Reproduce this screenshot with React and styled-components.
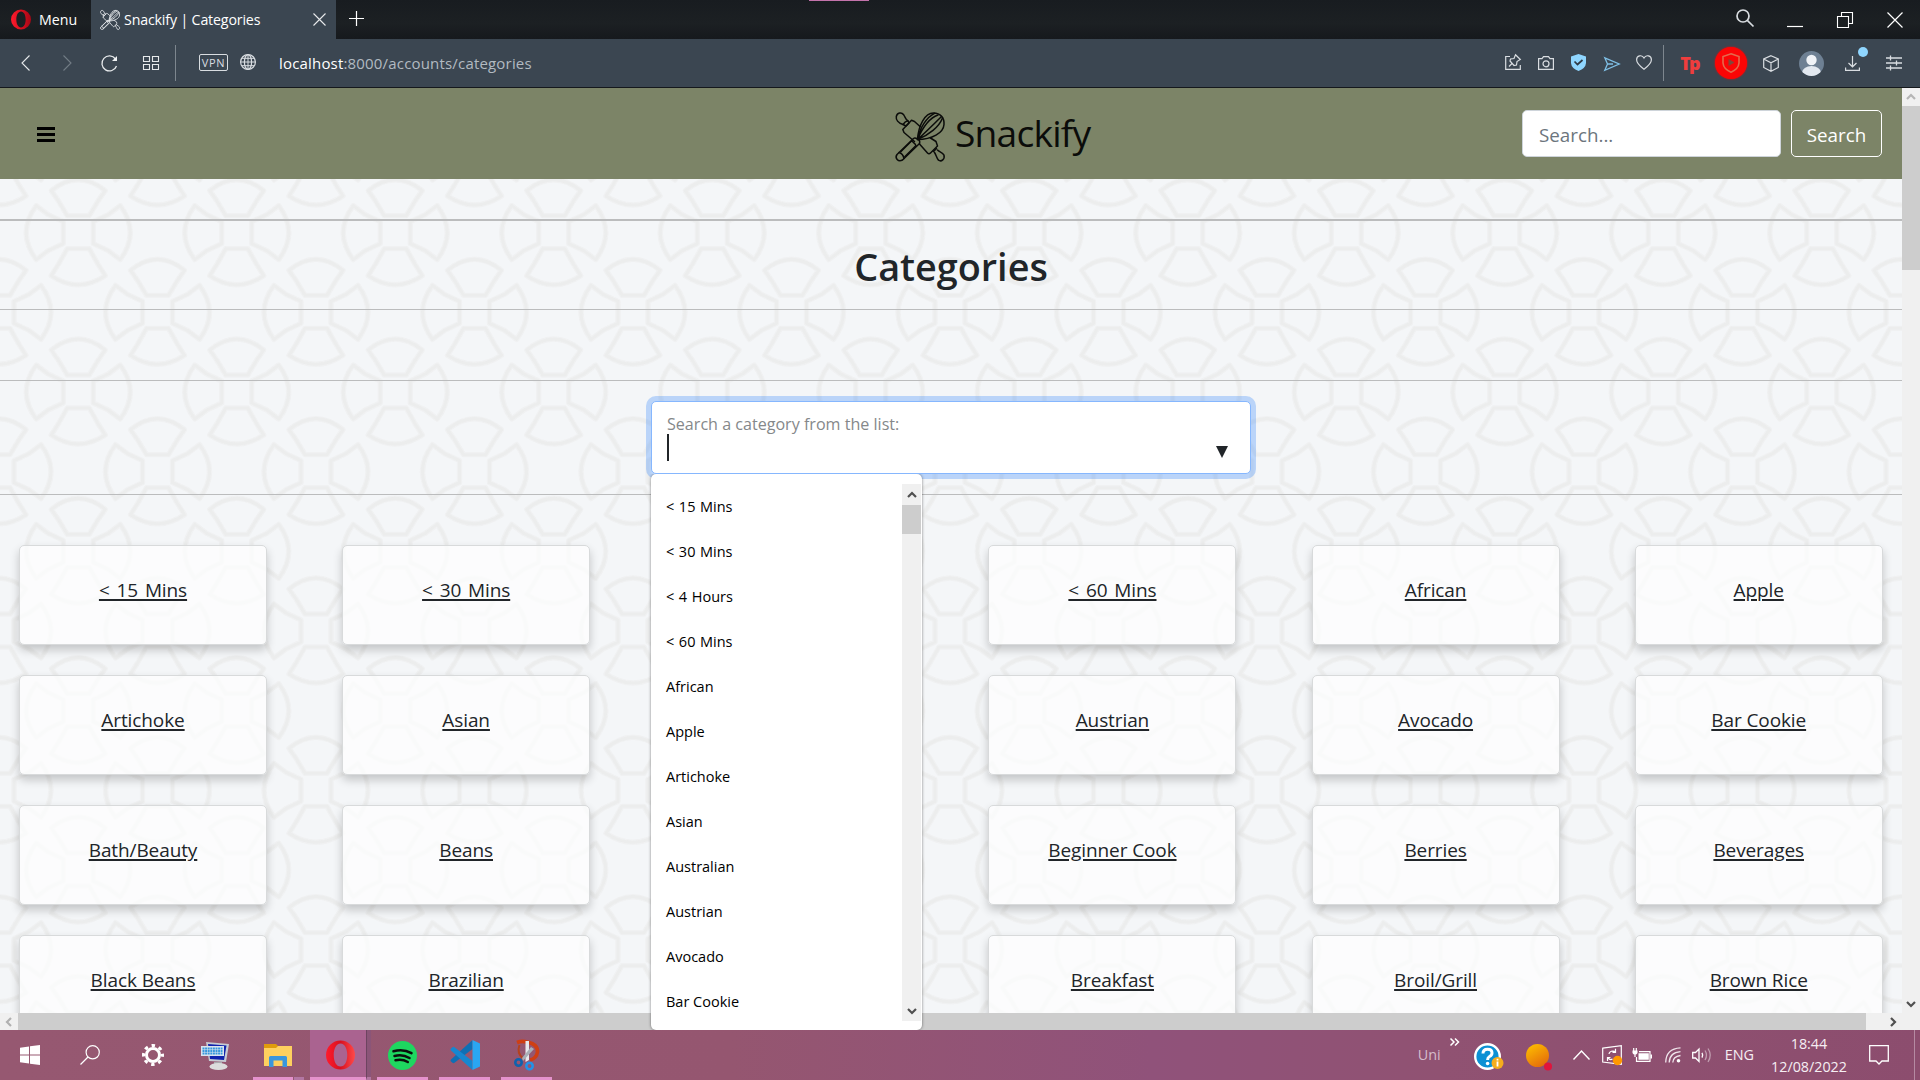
import React from "react";
import styled, { createGlobalStyle, css } from "styled-components";

const petals = [
  "M-11 -16 L11 -16 L20 -31 L27 -41 Q0 -63 -27 -41 L-20 -31 Z",
  "M-11 17 L11 17 L20 33 L27 44 Q0 62 -27 44 L-20 33 Z",
  "M-15 -10 L-15 12 L-30 19 L-42 28 Q-62 1 -42 -26 L-30 -17 Z",
  "M15 -10 L15 12 L30 19 L42 28 Q62 1 42 -26 L30 -17 Z",
].join(" ");
const COLS = 2;
const ROWS = 3;
const TILE_W = 317;
const TILE_H = 478;
const PX = TILE_W / COLS;
const PY = TILE_H / ROWS;
const centres = [];
for (let r = 0; r <= ROWS; r += 1) {
  for (let c = 0; c <= COLS; c += 1) {
    centres.push([c * PX, r * PY]);
    if (r < ROWS && c < COLS) centres.push([(c + 0.5) * PX, (r + 0.5) * PY]);
  }
}
const flowers = centres
  .map(([x, y]) => `<path transform='translate(${x.toFixed(2)} ${y.toFixed(2)})' d='${petals}'/>`)
  .join("");
const tile = `<svg xmlns='http://www.w3.org/2000/svg' width='${TILE_W}' height='${TILE_H}' viewBox='0 0 ${TILE_W} ${TILE_H}'><g fill='none' stroke='#ebecec' stroke-linejoin='round'><g stroke-width='5.4' stroke-opacity='.5'>${flowers}</g><g stroke-width='3' stroke-opacity='.8'>${flowers}</g></g></svg>`;
const tileUrl = `data:image/svg+xml,${encodeURIComponent(tile).replace(/'/g, "%27").replace(/\(/g, "%28").replace(/\)/g, "%29")}`;

const Global = createGlobalStyle`
  * { box-sizing: border-box; }
  html, body { margin: 0; padding: 0; overflow: hidden; }
  body { font-family: "Open Sans", "Noto Sans", sans-serif; }
  svg { display: block; flex: none; overflow: visible; }
`;

const Screen = styled.div`
  width: 1920px;
  height: 1080px;
  display: flex;
  flex-direction: column;
  overflow: hidden;
`;

const Label = styled.span`
  flex: none;
  white-space: pre;
  font-size: ${(p) => p.$size}px;
  font-weight: ${(p) => p.$weight || 400};
  letter-spacing: ${(p) => p.$track || 0}px;
  color: ${(p) => p.$color || "inherit"};
  margin-left: ${(p) => p.$gap || 0}px;
  line-height: 20px;
`;

const Glyph = styled.svg`
  width: ${(p) => p.$w}px;
  height: ${(p) => p.$h || p.$w}px;
  margin-left: ${(p) => p.$gap || 0}px;
  margin-top: ${(p) => p.$top || 0}px;
  fill: none;
  stroke: ${(p) => p.$color || "#d9dde1"};
  stroke-width: ${(p) => p.$stroke || 1.2};
`;

function Icon({ w, h = w, gap, top, color, stroke, box, children }) {
  return (
    <Glyph $w={w} $h={h} $gap={gap} $top={top} $color={color} $stroke={stroke} viewBox={box || `0 0 ${w} ${h}`}>
      {children}
    </Glyph>
  );
}

/* ---------- browser chrome ---------- */
const TabStrip = styled.header`
  height: 39px;
  flex: none;
  display: flex;
  align-items: stretch;
  position: relative;
  background: linear-gradient(#181c20, #1c2023 60%, #16191d);
  color: #fff;
`;
const Accent = styled.i`
  position: absolute;
  top: 0;
  left: 809px;
  width: 60px;
  height: 1px;
  background: #c373ab;
`;
const MenuButton = styled.div`
  width: 91px;
  padding-left: 11px;
  display: flex;
  align-items: center;
`;
const Tab = styled.div`
  width: 245px;
  padding: 0 10px 0 9px;
  display: flex;
  align-items: center;
  background: #3b4651;
`;
const Spacer = styled.div`
  flex: 1;
`;
const StripTools = styled.div`
  display: flex;
  align-items: center;
  padding-right: 17px;
`;
const AddressBar = styled.div`
  height: 49px;
  flex: none;
  display: flex;
  align-items: center;
  padding: 0 18px 0 21px;
  background: #3b4651;
  border-bottom: 1px solid #15181c;
`;
const Divider = styled.i`
  width: 1px;
  height: 36px;
  margin-left: ${(p) => p.$gap}px;
  background: #7d868e;
`;
const VpnBadge = styled.div`
  width: 29px;
  height: 17px;
  margin: -2px 0 0 23px;
  display: flex;
  align-items: center;
  justify-content: center;
  border: 1px solid #d9dde1;
  border-radius: 2px;
  color: #d9dde1;
  font-size: 11px;
  letter-spacing: 0.6px;
`;
const RedBadge = styled.div`
  width: 32px;
  height: 32px;
  margin-left: 16px;
  border-radius: 50%;
  background: #fb0505;
  box-shadow: 0 0 2px #fb0505;
  display: flex;
  align-items: center;
  justify-content: center;
`;

/* ---------- viewport ---------- */
const Viewport = styled.div`
  height: 942px;
  flex: none;
  display: grid;
  grid-template-columns: 1902px 18px;
  grid-template-rows: 925px 17px;
  position: relative;
`;
const Page = styled.main`
  overflow: hidden;
  background: #f4f6f8 url("${tileUrl}") -1px 64px / ${TILE_W}px ${TILE_H}px;
`;
const Navbar = styled.nav`
  height: 91px;
  padding: 0 20px 0 37px;
  display: grid;
  grid-template-columns: 858px auto 1fr;
  align-items: center;
  background: #7c8467;
`;
const Burger = styled.div`
  width: 18px;
  height: 15px;
  margin-top: 2px;
  display: flex;
  flex-direction: column;
  justify-content: space-between;
  i {
    height: 3px;
    background: #000;
  }
`;
const Brand = styled.div`
  display: flex;
  align-items: center;
  margin-top: -1px;
  color: #0b0c0a;
`;
const SearchForm = styled.div`
  display: flex;
  justify-content: flex-end;
  gap: 10px;
`;
const field = css`
  height: 47px;
  border-radius: 5px;
  display: flex;
  align-items: center;
`;
const SearchBox = styled.div`
  ${field}
  width: 259px;
  padding: 2px 0 0 16px;
  border: 1px solid #ced4da;
  background: #fff;
  color: #6c757d;
`;
const SearchButton = styled.div`
  ${field}
  width: 91px;
  padding-top: 2px;
  justify-content: center;
  border: 1px solid #fff;
  color: #fff;
`;
const Rule = styled.div`
  height: ${(p) => p.$h || 1}px;
  margin-top: ${(p) => p.$gap}px;
  background: #bbbcbd;
`;
const Heading = styled.h1`
  height: 88px;
  margin: 0;
  padding-top: 18px;
  text-align: center;
  color: #212529;
  font-size: 37.8px;
  line-height: 56px;
  font-weight: 600;
`;
const Picker = styled.div`
  width: 600px;
  height: 73px;
  margin: 20px 0 0 651px;
  padding: 11px 22px 0 15px;
  border: 1px solid #86b7fe;
  border-radius: 5px;
  box-shadow: 0 0 0 5px rgba(13, 110, 253, 0.25);
  background: #fff;
`;
const PickerLine = styled.div`
  display: flex;
  justify-content: space-between;
  align-items: center;
  margin-top: -1px;
`;
const Caret = styled.i`
  width: 2px;
  height: 27px;
  background: #212529;
`;
const Arrow = styled.i`
  margin-top: 8px;
  border: 6.5px solid transparent;
  border-top: 12px solid #212529;
  border-bottom: 0;
`;
const Grid = styled.section`
  margin: 50px 0 0 19px;
  display: grid;
  grid-template-columns: repeat(6, 248px);
  grid-auto-rows: 100px;
  column-gap: 75.15px;
  row-gap: 30px;
`;
const Card = styled.a`
  display: flex;
  justify-content: center;
  padding-top: 31px;
  border: 1px solid #d8dadb;
  border-radius: 5px;
  background: rgba(255, 255, 255, 0.7);
  background-clip: padding-box;
  box-shadow: 0 5px 10px rgba(0, 0, 0, 0.2);
  color: #212529;
  font-size: 19px;
  line-height: 26px;
  letter-spacing: -0.1px;
  word-spacing: ${(p) => (p.$measure ? 2 : 0)}px;
  text-decoration: underline;
  text-decoration-thickness: 2px;
  text-underline-offset: 2px;
`;
const VScroll = styled.div`
  width: ${(p) => p.$w || 18}px;
  background: #f0f0f0;
  display: flex;
  flex-direction: column;
  align-items: center;
`;
const VThumb = styled.i`
  width: 100%;
  height: ${(p) => p.$h}px;
  background: #cdcdcd;
`;
const ScrollEnd = styled.div`
  width: 18px;
  height: ${(p) => p.$h || 18}px;
  flex: none;
  display: flex;
  align-items: center;
  justify-content: center;
`;
const HScroll = styled.div`
  grid-column: 1 / 3;
  height: 17px;
  display: flex;
  align-items: center;
  background: #f0f0f0;
`;
const HThumb = styled.i`
  width: 1848px;
  height: 17px;
  background: #cdcdcd;
`;

const Dropdown = styled.div`
  position: absolute;
  left: 651px;
  top: 386px;
  width: 271px;
  height: 556px;
  padding: 10px 1px 9px 0;
  display: flex;
  border-radius: 5px;
  background: #fff;
  box-shadow: 0 0 3px rgba(0, 0, 0, 0.5);
  clip-path: inset(0 -6px 0 -6px);
`;
const Options = styled.ul`
  flex: 1;
  margin: 0;
  padding: 0 0 0 15px;
  list-style: none;
  overflow: hidden;
`;
const Option = styled.li`
  height: 45px;
  display: flex;
  align-items: center;
  white-space: pre;
  color: #000;
  font-size: 14.5px;
  word-spacing: ${(p) => (p.$measure ? 0.8 : 0)}px;
`;

/* ---------- taskbar ---------- */
const Taskbar = styled.footer`
  height: 50px;
  flex: none;
  display: flex;
  background: linear-gradient(90deg, #965871, #955670 38%, #90527a 60%, #905272 75%, #8c4d6e);
  color: #fff;
`;
const Task = styled.div`
  width: ${(p) => p.$w}px;
  height: 50px;
  flex: none;
  display: flex;
  align-items: center;
  justify-content: center;
  margin-right: ${(p) => p.$mr || 0}px;
  padding-top: 3px;
  background: ${(p) => (p.$active ? "#aa6390" : "transparent")};
  border-bottom: 3px solid ${(p) => (p.$open ? "#e592cc" : "transparent")};
`;
const Stack = styled.div`
  width: ${(p) => p.$w}px;
  height: 50px;
  flex: none;
  margin-right: ${(p) => p.$mr}px;
  background: ${(p) => p.$bg || "transparent"};
  border-left: ${(p) => (p.$bg ? "1px solid #6d4460" : "0")};
  border-bottom: 3px solid #b377a3;
`;
const Tray = styled.div`
  display: flex;
  align-items: center;
  color: #f6eef3;
`;
const Clock = styled.div`
  width: 90px;
  margin-left: 10px;
  display: flex;
  flex-direction: column;
  align-items: center;
  gap: 3px;
`;
const DesktopEdge = styled.i`
  width: 1px;
  height: 50px;
  margin: 0 5px 0 25px;
  background: #b58aa2;
`;

function Utensils({ size, color, stroke, gap, top }) {
  return (
    <Icon w={size} gap={gap} top={top} color={color} stroke={stroke} box="0 0 50 50">
      <g strokeLinejoin="round" strokeLinecap="round">
        <path d="M8 12.5 C3 11 .8 7.500 1.300 4.500 C2.200 .7 6.500 -.2 8.700 2.800 C10.500 5.500 10.500 7.500 12.800 8.700" />
        <path d="M8 12.500 L10 10.200 L12.800 8.700 L14 11 L11 14 Z" />
        <path d="M7.800 17.500 L16.500 8.300 L19.500 9.500 L25 14.500 M7.800 17.500 L9 20.500 L19.500 29.500 M24.500 32 L32.500 41 Q34 42.500 35.500 41 L42.500 34 L41 29.500 L35.500 26" />
        <path d="M38.500 39.500 L41.500 36.500 M39.500 40.500 C41 42.500 41.500 46 43.500 48.200 C46.500 50.200 50 47 49 43.200 C47.500 40.200 44.500 40 42.500 38" />
        <path d="M22.500 27.500 C23.500 13 30 1 38.500 1 C45.500 1 49.500 6 49 12.500 C48.500 21 37 27.500 22.500 27.500 Z" />
        <path d="M22.500 27.500 C27 17 34 6 43 3 M22.500 27.500 C31 20 39 12 46.500 4.500 M22.500 27.500 C34 23 44 15 47.500 6 M22.500 27.500 C25 15 32 5 39.500 1.300" />
        <path d="M18.500 26.500 L2 42.500 C-.5 46 3 50.300 7.500 48 L24.500 31.500 Q25.500 28.500 22.500 27 Q20 25.500 18.500 26.500 Z" />
        <path d="M4 40.500 Q8 41.500 9 46.500 M17.500 29.500 L20.500 32.500 M6 39.500 L17 28.500 M10 44.500 L21 33.500" />
      </g>
    </Icon>
  );
}

function OperaLogo({ w, h, gap, id }) {
  return (
    <Icon w={w} h={h} gap={gap} box="0 0 30 30">
      <defs>
        <linearGradient id={id} x1="0" y1="0" x2="1" y2="0">
          <stop offset="0" stopColor="#ff1b2d" />
          <stop offset=".5" stopColor="#d8101f" />
          <stop offset="1" stopColor={id === "operaBig" ? "#ff4a4a" : "#a80716"} />
        </linearGradient>
      </defs>
      <path stroke="none" fill={`url(#${id})`} fillRule="evenodd" d="M15 0 A15 15 0 1 0 15 30 A15 15 0 1 0 15 0 Z M15 3 C19.500 3 22 8.500 22 15 S19.500 27 15 27 S8 21.500 8 15 S10.500 3 15 3 Z" />
    </Icon>
  );
}

const Chevron = ({ dir, color = "#505050" }) => {
  const turn = { up: 0, right: 90, down: 180, left: 270 }[dir];
  return (
    <Icon w={10} color={color} stroke={2.2}>
      <path transform={`rotate(${turn} 5 5)`} d="M1 7 L5 3 L9 7" />
    </Icon>
  );
};

const options = ["< 15 Mins", "< 30 Mins", "< 4 Hours", "< 60 Mins", "African", "Apple", "Artichoke", "Asian", "Australian", "Austrian", "Avocado", "Bar Cookie"];
const cards = [
  ["< 15 Mins", "< 30 Mins", null, "< 60 Mins", "African", "Apple"],
  ["Artichoke", "Asian", null, "Austrian", "Avocado", "Bar Cookie"],
  ["Bath/Beauty", "Beans", null, "Beginner Cook", "Berries", "Beverages"],
  ["Black Beans", "Brazilian", null, "Breakfast", "Broil/Grill", "Brown Rice"],
].flat();

function BrowserTop() {
  return (
    <>
      <TabStrip>
        <Accent />
        <MenuButton>
          <OperaLogo w={20} h={21} id="operaSmall" />
          <Label $size={14.2} $gap={8}>Menu</Label>
        </MenuButton>
        <Tab>
          <Utensils size={20} color="#dfe3e6" stroke={2.2} />
          <Label $size={14.2} $gap={4} $track={-0.15}>Snackify | Categories</Label>
          <Spacer />
          <Icon w={13} color="#e8eaec" stroke={1.1}><path d="M.5 .5 L12.500 12.500 M12.500 .5 L.5 12.500" /></Icon>
        </Tab>
        <StripTools>
          <Icon w={15} gap={13} top={-2} color="#fff"><path d="M7.500 0 V15 M0 7.500 H15" /></Icon>
        </StripTools>
        <Spacer />
        <StripTools>
          <Icon w={18} top={-3} stroke={1.7}><circle cx="7" cy="7" r="6" /><path d="M11.300 11.300 L17.500 17.500" /></Icon>
          <Icon w={16} gap={33} color="#fff"><path d="M0 14.500 H16" /></Icon>
          <Icon w={16} gap={34} color="#fff" stroke={1.1}><path d="M.5 4.500 H11.500 V15.500 H.5 Z M4.500 4.500 V.5 H15.500 V11.500 H11.500" /></Icon>
          <Icon w={16} gap={34} color="#fff"><path d="M.5 .5 L15.500 15.500 M15.500 .5 L.5 15.500" /></Icon>
        </StripTools>
      </TabStrip>
      <AddressBar>
        <Icon w={9} h={16} stroke={1.1} color="#e6e9eb"><path d="M8.500 .5 L1 8 L8.500 15.500" /></Icon>
        <Icon w={9} h={16} gap={33} stroke={1.1} color="#727c85"><path d="M.5 .5 L8 8 L.5 15.500" /></Icon>
        <Icon w={17} gap={29} stroke={1.3} color="#e6e9eb"><path d="M15.500 11 A7.500 7.500 0 1 1 14.500 4" /><path d="M16 1 V6 H11 Z" fill="#f0f2f4" stroke="none" /></Icon>
        <Icon w={16} gap={25} stroke={1.1} color="#e6e9eb"><path d="M.5 1.500 H6.500 V6.500 H.5 Z M9.500 1.500 H15.500 V6.500 H9.500 Z M.5 9.500 H6.500 V14.500 H.5 Z M9.500 9.500 H15.500 V14.500 H9.500 Z" /></Icon>
        <Divider $gap={16} />
        <VpnBadge>VPN</VpnBadge>
        <Icon w={16} gap={12} top={-2}><circle cx="8" cy="8" r="7.400" /><ellipse cx="8" cy="8" rx="3.600" ry="7.400" /><path d="M.6 8 H15.400 M1.800 4.300 H14.200 M1.800 11.700 H14.200 M8 .6 V15.400" strokeWidth="1" /></Icon>
        <Label $size={15} $gap={23} $track={0.18} $color="#fff">localhost</Label>
        <Label $size={15} $track={0.18} $color="#b2bac1">:8000/accounts/categories</Label>
        <Spacer />
        <Icon w={16} top={-2}><path d="M5 2.500 H.7 V15.300 H15.300 V11 M4 12.500 L7.500 9 M10.500 .8 L15.300 5.500 L12 7.500 L11.500 11 L9 11.500 L5 7 L5.500 5 L9 4.500 Z" /></Icon>
        <Icon w={16} h={14} gap={17}><path d="M.6 2.600 H4 L5.500 .6 H10.500 L12 2.600 H15.400 V13.400 H.6 Z" /><circle cx="8" cy="7.800" r="3" /></Icon>
        <Icon w={15} h={17} gap={17} top={-1}><path d="M7.500 0 L15 2.500 V9 Q14.500 14.500 7.500 17 Q.5 14.500 0 9 V2.500 Z" fill="#8fd6ff" stroke="none" /><path d="M3.500 7.500 L6.500 10.500 L11.500 6" stroke="#2e3944" strokeWidth="1.700" /></Icon>
        <Icon w={16} h={14} gap={18} top={1} color="#7fc0e6" stroke={1.3}><path d="M.8 .8 L15.200 7 L.8 13.300 L3.500 7 Z M3.500 7 H9" /></Icon>
        <Icon w={16} h={15} gap={16} top={-1}><path d="M8 14.300 C3 10.500 .6 8 .6 4.800 C.6 .5 6 -.7 8 3 C10 -.7 15.400 .5 15.400 4.800 C15.400 8 13 10.500 8 14.300 Z" /></Icon>
        <Divider $gap={11} />
        <Label $size={18} $weight={800} $gap={16} $track={-1.7} $color="#ef3d3d">Tp</Label>
        <RedBadge>
          <Icon w={18} h={20} color="#e36a4c" stroke={1.6}><path d="M9 .8 L17 3.500 V10 Q16.500 16 9 19.200 Q1.500 16 1 10 V3.500 Z" /><path d="M6.500 6 L12.500 9.500 L6.500 13 Z" fill="#80483c" stroke="none" /></Icon>
        </RedBadge>
        <Icon w={16} h={17} gap={16}><path d="M8 .7 L15.300 4 V12.500 L8 16.300 L.7 12.500 V4 Z M.7 4 L8 7.800 L15.300 4 M8 7.800 V16.300" /></Icon>
        <Icon w={25} gap={20}>
          <clipPath id="face"><circle cx="12.500" cy="12.500" r="12.500" /></clipPath>
          <g stroke="none" clipPath="url(#face)"><path d="M0 0 H25 V25 H0 Z" fill="#6e8093" /><circle cx="12.500" cy="9" r="5.200" fill="#f0f3f7" /><ellipse cx="12.500" cy="21.500" rx="9.500" ry="6.500" fill="#e2e8ef" /></g>
        </Icon>
        <Icon w={15} h={15} gap={21}><path d="M7.500 0 V10.500 M3.500 7 L7.500 10.800 L11.500 7 M.6 11.500 V14.300 H14.400 V11.500" /><circle cx="18" cy="-4" r="5" fill="#8fd6ff" stroke="none" /></Icon>
        <Icon w={16} gap={26} stroke={1.3}><path d="M0 3 H16 M0 8 H16 M0 13 H16 M4.500 .5 V5.500 M10.500 5.500 V10.500 M4.500 10.500 V15.500" /></Icon>
      </AddressBar>
    </>
  );
}

function CategoriesPage() {
  return (
    <Page>
      <Navbar>
        <Burger><i /><i /><i /></Burger>
        <Brand>
          <Utensils size={50} color="#0b0c0a" stroke={1.5} top={8} />
          <Label $size={37.2} $gap={10} $track={-0.8}>Snackify</Label>
        </Brand>
        <SearchForm>
          <SearchBox><Label $size={18.8}>Search...</Label></SearchBox>
          <SearchButton><Label $size={18.8}>Search</Label></SearchButton>
        </SearchForm>
      </Navbar>
      <Rule $gap={40} $h={2} />
      <Heading>Categories</Heading>
      <Rule $gap={0} />
      <Rule $gap={70} />
      <Picker>
        <Label $size={16.1} $color="#85888a">Search a category from the list:</Label>
        <PickerLine><Caret /><Arrow /></PickerLine>
      </Picker>
      <Rule $gap={20} />
      <Grid>
        {cards.map((name, i) =>
          name ? <Card key={name} $measure={name.startsWith("<")}>{name}</Card> : <span key={i} />
        )}
      </Grid>
    </Page>
  );
}

function SystemBar() {
  return (
    <Taskbar>
      <Task $w={60}><Icon w={20}><path fill="#fff" stroke="none" d="M0 2.800 L9 1.500 V9.500 H0 Z M10 1.300 L20 0 V9.500 H10 Z M0 10.500 H9 V18.500 L0 17.200 Z M10 10.500 H20 V20 L10 18.700 Z" /></Icon></Task>
      <Task $w={60}><Icon w={20} color="#fff" stroke={1.2}><circle cx="12.700" cy="7.300" r="6.600" /><path d="M8 12 L.5 19.500" /></Icon></Task>
      <Task $w={66}><Icon w={22} color="#fff"><circle cx="11" cy="11" r="6.500" strokeWidth="3" /><circle cx="11" cy="11" r="9.500" strokeWidth="3" strokeDasharray="3.460 4" strokeDashoffset="1.700" /></Icon></Task>
      <Task $w={58}>
        <Icon w={29}><path d="M5 1 L28 3 L25 21 L8 20 Z" fill="#c6cbd3" stroke="none" /><path d="M7 3 L25.500 4.500 L23 19 L9 18 Z" fill="#1022ad" stroke="none" /><path d="M0 5 H23 V15 H0 Z" fill="#d9e4ee" stroke="none" /><path d="M1.500 7.500 H21.500 M1.500 10 H21.500 M1.500 12.500 H21.500" stroke="#3897dc" strokeWidth="1.800" strokeDasharray="2 .6" /><path d="M13 21 H21 V24 H13 Z" fill="#a9abae" stroke="none" /><ellipse cx="17.500" cy="25.500" rx="9" ry="3.600" fill="#dcdcdc" stroke="none" /></Icon>
      </Task>
      <Task $w={9} />
      <Task $w={40} $open $mr={1}>
        <Icon w={28} h={24} gap={10}><path d="M0 1 H12 L14 3 V6 H0 Z" fill="#df9b0c" stroke="none" /><path d="M0 5 H12 L14 3 H28 V23 H0 Z" fill="#fed05f" stroke="none" /><path d="M5 24 V14.500 Q5 13 6.500 13 H21.500 Q23 13 23 14.500 V24 H18.500 V17.500 H9.500 V24 Z" fill="#3a96dd" stroke="none" /></Icon>
      </Task>
      <Stack $w={10} $mr={6} />
      <Task $w={56} $open $active><OperaLogo w={29} h={30} id="operaBig" gap={4} /></Task>
      <Stack $w={5} $mr={6} $bg="#8b5578" />
      <Task $w={51} $open $mr={11}><Icon w={29}><circle cx="14.500" cy="14.500" r="14.500" fill="#1ed760" stroke="none" /><path d="M5.500 10.300 Q15 7.300 23.500 12.200 M6.500 15 Q14.500 12.800 21.500 17 M7.500 19.300 Q14 17.600 19.800 21" stroke="#0b0f0c" strokeWidth="2.500" strokeLinecap="round" /></Icon></Task>
      <Task $w={51} $open $mr={11}><Icon w={30} h={30}><path d="M22.500 0 L1 19.500 Q0 20.500 1 21.500 L2.500 22.800 Q3.500 23.500 4.500 22.700 L22.500 9 Z" fill="#0f6fb4" stroke="none" /><path d="M22.500 30 L1 10.500 Q0 9.500 1 8.500 L2.500 7.200 Q3.500 6.500 4.500 7.300 L22.500 21 Z" fill="#1687d0" stroke="none" /><path d="M22.500 0 L30 3.500 V26.500 L22.500 30 Z" fill="#2aa6f2" stroke="none" /></Icon></Task>
      <Task $w={51} $open>
        <Icon w={26} h={30}><path d="M3 2.500 Q8 .5 13 2 Q24 4 23.500 12 Q22.500 18.500 16 20" stroke="#cf3f13" strokeWidth="3.600" /><path d="M5.500 5 Q2.500 13 9 18.500" stroke="#b5421c" strokeWidth="2" /><path d="M11.500 1 H15 V20 L11.500 22 Z" fill="#e7e9ec" stroke="none" /><path d="M20 9 L9 21 L8 18 L17 7 Z" fill="#a9afb6" stroke="none" /><circle cx="4.500" cy="22.500" r="3.200" stroke="#0f62ad" strokeWidth="2.600" /><circle cx="15.500" cy="26" r="3.200" stroke="#2392e6" strokeWidth="2.600" /></Icon>
      </Task>
      <Spacer />
      <Tray>
        <Label $size={14.4} $color="#d5bccb">Uni</Label>
        <Icon w={9} h={8} gap={9} top={-26} color="#fff" stroke={1.5}><path d="M.5 .5 L4 4 L.5 7.500 M5 .5 L8.500 4 L5 7.500" /></Icon>
        <Icon w={30} h={28} gap={15} top={3}><circle cx="13.500" cy="13.500" r="12.300" fill="#0c90d4" stroke="#fff" strokeWidth="2.400" /><path d="M9 10.500 Q9 6.300 13.500 6.300 Q18 6.300 18 10 Q18 12.200 15.500 13.500 Q13.600 14.500 13.600 17" stroke="#fff" strokeWidth="3" /><circle cx="13.600" cy="20.500" r="1.800" fill="#fff" stroke="none" /><circle cx="23.500" cy="20" r="6" fill="#f5ad1c" stroke="none" /><path d="M23.500 18.500 V23.500 M23.500 15.800 V17.500" stroke="#fff" strokeWidth="1.800" /></Icon>
        <Icon w={26} gap={22} top={4}>
          <defs><linearGradient id="sun" x1="0" y1="0" x2=".6" y2="1"><stop offset="0" stopColor="#ffc400" /><stop offset="1" stopColor="#e56f0a" /></linearGradient></defs>
          <circle cx="11.500" cy="11.500" r="11.500" fill="url(#sun)" stroke="none" /><circle cx="22" cy="22.500" r="4" fill="#e0143c" stroke="none" />
        </Icon>
        <Icon w={17} h={10} gap={21} color="#fff" stroke={1.4}><path d="M.5 9.500 L8.500 1 L16.500 9.500" /></Icon>
        <Icon w={20} gap={12} color="#fff" stroke={1.2}><path d="M.7 3.200 L19.300 .7 V19.300 L.7 17 Z M7 9 Q7.500 6 11 6 L13.500 6.500 M13.500 3.800 V7.300 H10.500 M5.500 16 V12.500 H8.500 M6 12.800 Q8 15.500 10.500 14" /><circle cx="15.500" cy="15.500" r="4.700" fill="#ff9800" stroke="none" /></Icon>
        <Icon w={20} h={14} gap={10} color="#fff" stroke={1.2}><path d="M4.500 9 V13.300 H18 V3.600 H7" /><path d="M6.500 5.300 H16.800 V11.800 H6.500 Z M18.500 6.500 H20 V10.500 H18.500 Z M.5 2.500 H5.500 V5 Q5 6.500 3 6.500 Q1 6.500 .5 5 Z" fill="#fff" stroke="none" /><path d="M1.700 0 V3 M4.300 0 V3 M3 6 V9" /></Icon>
        <Icon w={16} gap={13} color="#f0e5ec" stroke={1.3}><path d="M.7 15.500 Q1 1.500 15.500 .8 M4.200 15.500 Q4.500 5.500 15.500 4.600 M7.800 15.500 Q8 9.500 15.500 8.500" /><circle cx="13.500" cy="13.700" r="1.800" fill="#fff" stroke="none" /></Icon>
        <Icon w={20} h={16} gap={11} color="#fff" stroke={1.3}><path d="M.7 5.500 H3.500 L7 2 V14.500 L3.500 11 H.7 Z" /><path d="M10 5.800 Q11.500 8.200 10 10.700" /><path d="M13 3.500 Q16 8.200 13 13 M16 1.500 Q20.500 8.200 16 15" opacity=".45" /></Icon>
        <Label $size={14.4} $gap={13}>ENG</Label>
        <Clock><Label $size={14.3}>18:44</Label><Label $size={14.3}>12/08/2022</Label></Clock>
        <Icon w={20} h={20} gap={15} color="#fff" stroke={1.3}><path d="M.7 .7 H19.300 V16 H13 L10 19 L7 16 H.7 Z" /></Icon>
        <DesktopEdge />
      </Tray>
    </Taskbar>
  );
}

export default function App() {
  return (
    <Screen>
      <Global />
      <BrowserTop />
      <Viewport>
        <CategoriesPage />
        <VScroll>
          <ScrollEnd><Chevron dir="up" color="#b5b5b5" /></ScrollEnd>
          <VThumb $h={164} />
          <Spacer />
          <ScrollEnd><Chevron dir="down" /></ScrollEnd>
        </VScroll>
        <HScroll>
          <ScrollEnd><Chevron dir="left" color="#b0b0b0" /></ScrollEnd>
          <HThumb />
          <Spacer />
          <ScrollEnd><Chevron dir="right" /></ScrollEnd>
          <ScrollEnd />
        </HScroll>
        <Dropdown>
          <Options>{options.map((o) => <Option key={o} $measure={o.startsWith("<")}>{o}</Option>)}</Options>
          <VScroll $w={19}>
            <ScrollEnd $h={21}><Chevron dir="up" /></ScrollEnd>
            <VThumb $h={29} />
            <Spacer />
            <ScrollEnd $h={21}><Chevron dir="down" /></ScrollEnd>
          </VScroll>
        </Dropdown>
      </Viewport>
      <SystemBar />
    </Screen>
  );
}
